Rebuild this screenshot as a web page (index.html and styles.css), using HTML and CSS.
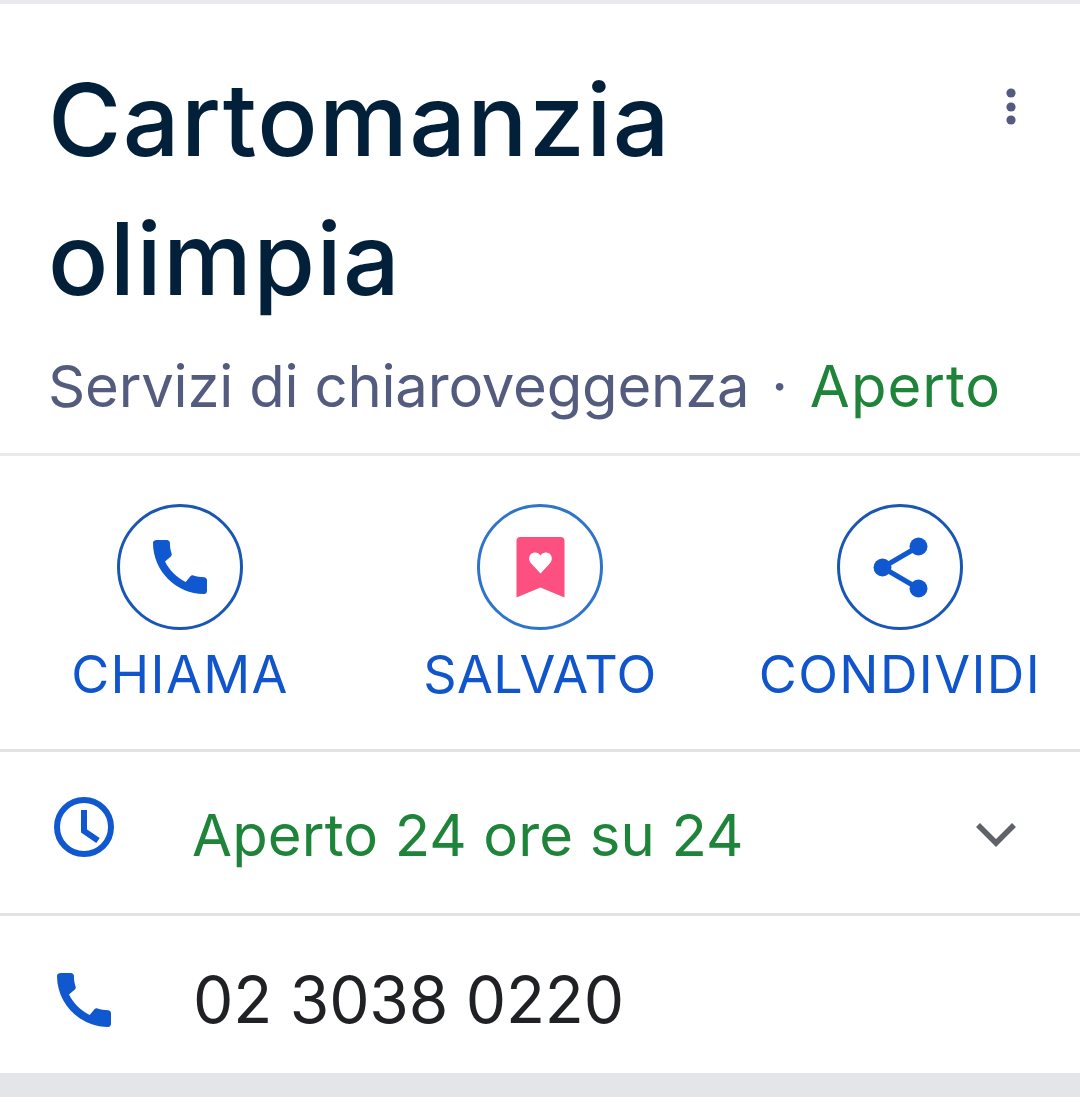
FILE: index.html
```html
<!DOCTYPE html>
<html lang="it">
<head>
  <meta charset="UTF-8">
  <title>Cartomanzia olimpia</title>
  <link rel="stylesheet" href="styles.css">
</head>
<body>

  <div class="card">
    <!-- Intestazione -->
    <header class="header">
      <div class="title-row">
        <h1 class="title">Cartomanzia olimpia</h1>
        <svg class="more" viewBox="0 0 18 44" aria-hidden="true">
          <circle cx="9" cy="8" r="4.6"/>
          <circle cx="9" cy="22" r="4.6"/>
          <circle cx="9" cy="35" r="4.6"/>
        </svg>
      </div>
      <p class="subtitle">Servizi di chiaroveggenza<span class="dot">·</span><span class="open">Aperto</span></p>
    </header>

    <!-- Azioni -->
    <div class="actions">
      <div class="action">
        <span class="ring">
          <svg class="ring-phone" viewBox="0 0 24 24" aria-hidden="true">
            <path class="blue" d="M20.01 15.38c-1.23 0-2.42-.2-3.53-.56-.35-.12-.74-.03-1.01.24l-1.57 1.97c-2.83-1.35-5.48-3.9-6.89-6.83l1.95-1.66c.27-.28.35-.67.24-1.02-.37-1.11-.56-2.3-.56-3.53 0-.54-.45-.99-.99-.99H4.19C3.65 3 3 3.24 3 3.99 3 13.28 10.73 21 20.01 21c.71 0 .99-.63.99-1.18v-3.45c0-.54-.45-.99-.99-.99z"/>
          </svg>
        </span>
        <span class="action-label">CHIAMA</span>
      </div>
      <div class="action">
        <span class="ring ring-light">
          <svg class="ring-icon" viewBox="0 0 75 75" aria-hidden="true">
            <path class="pink" d="M13.500 11a4 4 0 0 1 4-4h40a4 4 0 0 1 4 4v56.500l-24-10-24 10z"/>
            <path class="white" d="M37.500 43.500 28 33.200c-3.600-4.100-1.700-10.200 3.600-10.700 2.500-.2 4.500 1 5.900 3 1.400-2 3.400-3.200 5.900-3 5.300.5 7.200 6.600 3.600 10.700z"/>
          </svg>
        </span>
        <span class="action-label label-tight">SALVATO</span>
      </div>
      <div class="action">
        <span class="ring">
          <svg class="ring-icon" viewBox="0 0 75 75" aria-hidden="true">
            <path class="share-line" d="M55.500 16.500 19.500 37.500 55.500 58.500"/>
            <circle class="blue" cx="55.500" cy="16.500" r="9"/>
            <circle class="blue" cx="19.500" cy="37.500" r="9"/>
            <circle class="blue" cx="55.500" cy="58.500" r="9"/>
          </svg>
        </span>
        <span class="action-label">CONDIVIDI</span>
      </div>
    </div>

    <!-- Orari -->
    <div class="row row-hours">
      <svg class="row-icon" viewBox="0 0 64 64" aria-hidden="true">
        <circle class="clock-face" cx="32" cy="32" r="27"/>
        <path class="clock-hand" d="M32 15v21l14 9.500"/>
      </svg>
      <span class="row-text open">Aperto 24 ore su 24</span>
      <svg class="chevron" viewBox="0 0 44 28" aria-hidden="true">
        <path d="M4 4l18 18L40 4"/>
      </svg>
    </div>

    <!-- Telefono -->
    <div class="row row-phone">
      <svg class="row-icon" viewBox="0 0 24 24" aria-hidden="true">
        <path class="blue" d="M20.01 15.38c-1.23 0-2.42-.2-3.53-.56-.35-.12-.74-.03-1.01.24l-1.57 1.97c-2.83-1.35-5.48-3.9-6.89-6.83l1.95-1.66c.27-.28.35-.67.24-1.02-.37-1.11-.56-2.3-.56-3.53 0-.54-.45-.99-.99-.99H4.19C3.65 3 3 3.24 3 3.99 3 13.28 10.73 21 20.01 21c.71 0 .99-.63.99-1.18v-3.45c0-.54-.45-.99-.99-.99z"/>
      </svg>
      <span class="row-text phone">02 3038 0220</span>
    </div>
  </div>

  <div class="band"></div>

</body>
</html>
```

FILE: styles.css
```css
/* Base */
body {
  margin: 0;
  background-color: #fff;
  font-family: 'Inter', 'Noto Sans', sans-serif;
}

.card {
  border-top: 4px solid #e8eaed;
}

/* Intestazione */
.header {
  height: 452px;
  padding: 0 48px;
  box-sizing: border-box;
  border-bottom: 3px solid #e8eaed;
}

.title-row {
  display: flex;
  justify-content: space-between;
  padding-top: 46px;
}

.title {
  margin: 0;
  width: 760px;
  font-size: 100px;
  line-height: 139px;
  font-weight: 500;
  letter-spacing: 1.400px;
  color: #03203a;
}

.more {
  width: 18px;
  height: 44px;
  margin: 35px 12px 0 0;
  fill: #535b7e;
}

.subtitle {
  margin: 18px 0 0;
  font-size: 58px;
  line-height: 80px;
  letter-spacing: -0.2px;
  color: #535b7e;
}

.dot {
  margin: 0 22px;
}

.open {
  color: #1e8439;
}

.subtitle .open {
  letter-spacing: 1px;
}

/* Azioni */
.actions {
  display: grid;
  grid-template-columns: repeat(3, 360px);
  height: 296px;
  box-sizing: border-box;
  padding-top: 48px;
  border-bottom: 3px solid #e2e3e5;
}

.action {
  display: flex;
  flex-direction: column;
  align-items: center;
}

.ring {
  display: flex;
  align-items: center;
  justify-content: center;
  width: 126px;
  height: 126px;
  box-sizing: border-box;
  border: 3px solid #1a56b5;
  border-radius: 50%;
}

.ring-light {
  border-color: #2f74cb;
}

.ring-icon {
  width: 75px;
  height: 75px;
}

.ring-phone {
  width: 72px;
  height: 72px;
}

.action-label {
  margin-top: 13px;
  font-size: 52px;
  line-height: 64px;
  letter-spacing: 1.400px;
  color: #1155cc;
}

.label-tight {
  letter-spacing: 0.4px;
}

.blue {
  fill: #0f58cf;
}

.pink {
  fill: #fb5080;
}

.white {
  fill: #fff;
}

.share-line {
  fill: none;
  stroke: #0f58cf;
  stroke-width: 5;
}

/* Righe */
.row {
  display: flex;
  align-items: center;
  box-sizing: border-box;
  padding-left: 52px;
}

.row-hours {
  height: 164px;
  border-bottom: 3px solid #e2e3e5;
}

.row-phone {
  height: 157px;
}

.row-icon {
  flex: none;
  width: 64px;
  height: 64px;
  margin-top: -12px;
}

.row-phone .row-icon {
  width: 72px;
  height: 72px;
  margin: 11px -3px 0 -4px;
}

.row-text {
  margin-left: 76px;
  margin-top: 4px;
  font-size: 58px;
  line-height: 80px;
  letter-spacing: 0.15px;
}

.phone {
  margin-top: 10px;
  font-size: 64px;
  letter-spacing: -0.2px;
  color: #202124;
}

.clock-face,
.clock-hand {
  fill: none;
  stroke: #0f58cf;
  stroke-width: 6;
}

.chevron {
  width: 44px;
  height: 28px;
  margin: 4px 62px 0 auto;
  fill: none;
  stroke: #5f6368;
  stroke-width: 5.500;
}

/* Banda finale */
.band {
  height: 24px;
  background-color: #e4e5e8;
}
```
